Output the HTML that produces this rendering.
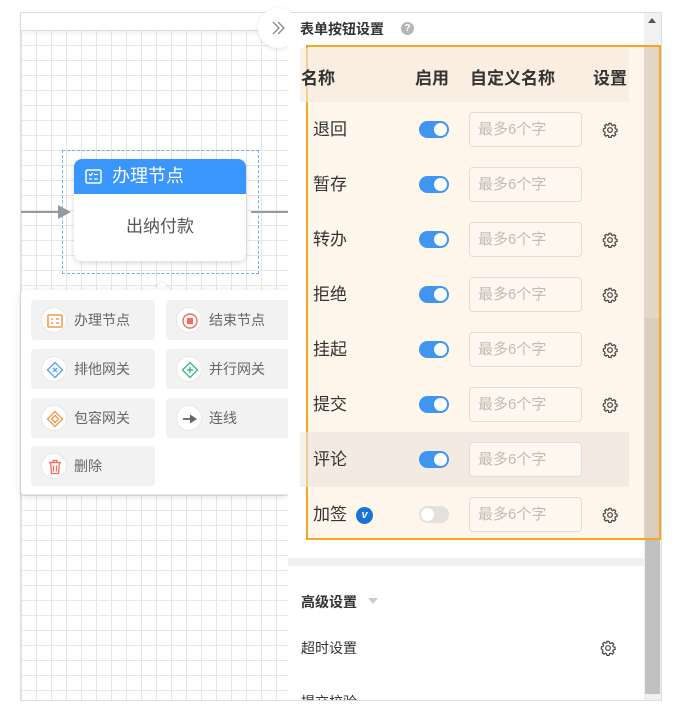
<!DOCTYPE html>
<html><head><meta charset="utf-8"><style>
*{box-sizing:border-box;margin:0;padding:0}
body{width:684px;height:720px;background:#fff;position:relative;overflow:hidden;font-family:"Liberation Sans","Noto Sans CJK SC",sans-serif;color:#333}
.a{position:absolute}
.grid{left:21px;top:30px;width:267px;height:670px;background-color:#fff;background-image:linear-gradient(#e6e6e6 1px,transparent 1px),linear-gradient(90deg,#e6e6e6 1px,transparent 1px);background-size:15px 15px;background-position:0 0}
.item{width:124px;height:40px;background:#f2f2f2;border-radius:4px;font-size:14px;color:#666;line-height:40px;padding-left:43px}
.ic{position:absolute;left:10px;top:7px;width:26px;height:26px;border-radius:50%;background:#fff;border:1px solid #e8e8e8}
.ic svg{position:absolute;left:4px;top:4px}
.row{left:300px;width:329px;height:55px}
.nm{position:absolute;left:13px;top:0;line-height:55px;font-size:17px;color:#333}
.tg{position:absolute;left:119px;top:19px;width:30px;height:17px;border-radius:9px;background:#3f95f0}
.tg::after{content:"";position:absolute;right:2px;top:2px;width:13px;height:13px;border-radius:50%;background:#fff}
.tg.off{background:#e4e1dc}.tg.off::after{left:2px;right:auto}
.in{position:absolute;left:169px;top:10px;width:113px;height:35px;border:1px solid #e6ddd0;border-radius:4px;font-size:15px;color:#c0bbb5;line-height:33px;padding-left:8px;background:#fdf7ef}
.gear{position:absolute;left:302px;top:20px}
</style></head><body>
<div class="a" style="left:20px;top:12px;width:642px;height:689px;border:1px solid #ddd"></div>
<div class="a grid"></div>
<div class="a" style="left:21px;top:13px;width:267px;height:17px;background:#fff;box-shadow:0 3px 6px rgba(0,0,0,.06)"></div>
<div class="a" style="left:21px;top:211px;width:40px;height:2px;background:#999"></div>
<div class="a" style="left:58px;top:205px;width:0;height:0;border-left:13px solid #999;border-top:7px solid transparent;border-bottom:7px solid transparent"></div>
<div class="a" style="left:251px;top:211px;width:37px;height:2px;background:#999"></div>
<div class="a" style="left:62px;top:150px;width:197px;height:124px;border:1px dashed #7aaaf5"></div>
<div class="a" style="left:74px;top:159px;width:172px;height:102px;background:#fff;border-radius:8px;box-shadow:0 2px 6px rgba(0,0,0,.15);overflow:hidden">
 <div style="height:35px;background:#3a96fa;color:#fff;font-size:18px;line-height:35px;padding-left:38px;position:relative">办理节点
 <svg class="a" style="left:11px;top:10px" width="17" height="15" viewBox="0 0 17 15"><rect x="1" y="1" width="15" height="13" rx="1.5" fill="none" stroke="#fff" stroke-width="1.5"/><path d="M4 5l1.5 1.5L8 4M4 10h3M9 5.5h4M9 10h4" stroke="#fff" stroke-width="1.3" fill="none"/></svg></div>
 <div style="text-align:center;font-size:17px;color:#555;line-height:66px">出纳付款</div>
</div>
<div class="a" style="left:156px;top:284px;width:12px;height:12px;background:#fff;transform:rotate(45deg);box-shadow:-1px -1px 2px rgba(0,0,0,.08)"></div>
<div class="a" style="left:21px;top:290px;width:267px;height:204px;background:#fff;box-shadow:0 2px 8px rgba(0,0,0,.15);border-radius:3px"></div>
<div class="a item" style="left:31px;top:300px"><div class="ic"><svg width="18" height="18" viewBox="0 0 18 18"><rect x="2" y="3" width="14" height="12" rx="1" fill="none" stroke="#f49a4e" stroke-width="1.6"/><path d="M5 7h2M5 11h2M10 7h3M10 11h3" stroke="#f49a4e" stroke-width="1.6"/></svg></div>办理节点</div>
<div class="a item" style="left:166px;top:300px"><div class="ic"><svg width="18" height="18" viewBox="0 0 18 18"><circle cx="9" cy="9" r="7" fill="none" stroke="#f46c5a" stroke-width="1.4"/><rect x="6" y="6" width="6" height="6" fill="#f46c5a"/></svg></div>结束节点</div>
<div class="a item" style="left:31px;top:349px"><div class="ic"><svg width="18" height="18" viewBox="0 0 18 18"><path d="M9 1.5L16.5 9 9 16.5 1.5 9z" fill="none" stroke="#5aa4f5" stroke-width="1.4"/><path d="M7 7l4 4M11 7l-4 4" stroke="#5aa4f5" stroke-width="1.4"/></svg></div>排他网关</div>
<div class="a item" style="left:166px;top:349px"><div class="ic"><svg width="18" height="18" viewBox="0 0 18 18"><path d="M9 1.5L16.5 9 9 16.5 1.5 9z" fill="none" stroke="#3dba82" stroke-width="1.4"/><path d="M9 6v6M6 9h6" stroke="#3dba82" stroke-width="1.4"/></svg></div>并行网关</div>
<div class="a item" style="left:31px;top:398px"><div class="ic"><svg width="18" height="18" viewBox="0 0 18 18"><path d="M9 1.5L16.5 9 9 16.5 1.5 9z" fill="none" stroke="#f49a4e" stroke-width="1.4"/><path d="M9 5.5L12.5 9 9 12.5 5.5 9z" fill="none" stroke="#f49a4e" stroke-width="1.4"/></svg></div>包容网关</div>
<div class="a item" style="left:166px;top:398px"><div class="ic"><svg width="18" height="18" viewBox="0 0 18 18"><path d="M2 9h8" stroke="#666" stroke-width="1.8"/><path d="M9 4.5L16 9 9 13.5z" fill="#666"/></svg></div>连线</div>
<div class="a item" style="left:31px;top:446px"><div class="ic"><svg width="18" height="18" viewBox="0 0 18 18"><path d="M3 4.5h12M7 4.5V2.5h4v2M4.5 4.5l1 11h7l1-11M7.5 7.5v6M10.5 7.5v6" stroke="#f46c5a" stroke-width="1.3" fill="none"/></svg></div>删除</div>
<div class="a" style="left:258px;top:8px;width:40px;height:40px;border-radius:50%;background:#fff;box-shadow:0 1px 5px rgba(0,0,0,.12)"><svg class="a" style="left:12px;top:12px" width="16" height="16" viewBox="0 0 16 16"><path d="M3 2l6 6-6 6M8 2l6 6-6 6" stroke="#888" stroke-width="1.3" fill="none"/></svg></div>
<div class="a" style="left:288px;top:13px;width:356px;height:687px;background:#fff"></div>
<div class="a" style="left:300px;top:19px;font-size:14px;font-weight:bold;color:#333">表单按钮设置</div>
<div class="a" style="left:401px;top:22px;width:13px;height:13px;border-radius:50%;background:#b5b5b5;color:#fff;font-size:10px;font-weight:bold;text-align:center;line-height:13px">?</div>
<div class="a" style="left:644px;top:13px;width:17px;height:687px;background:#f1f1f1"></div>
<div class="a" style="left:648px;top:18px;width:0;height:0;border-left:4px solid transparent;border-right:4px solid transparent;border-bottom:5px solid #555"></div>
<div class="a" style="left:645px;top:318px;width:15px;height:376px;background:#c1c1c1"></div>
<div class="a" style="left:306px;top:45px;width:355px;height:495px;background:rgba(253,243,228,.75);border:2px solid #f5a623"></div>
<div class="a" style="left:300px;top:48px;width:329px;height:54px;background:rgba(245,233,218,.6)"></div>
<div class="a" style="left:301px;top:64px;font-size:17px;font-weight:bold;color:#333">名称</div>
<div class="a" style="left:415px;top:64px;font-size:17px;font-weight:bold;color:#333">启用</div>
<div class="a" style="left:470px;top:64px;font-size:17px;font-weight:bold;color:#333">自定义名称</div>
<div class="a" style="left:593px;top:64px;font-size:17px;font-weight:bold;color:#333">设置</div>
<div class="a" style="left:300px;top:432px;width:329px;height:55px;background:rgba(235,228,218,.6)"></div>
<div class="a row" style="top:102px"><div class="nm">退回</div><div class="tg"></div><div class="in">最多6个字</div><svg class="gear" width="16" height="16" viewBox="0 0 24 24"><path d="M10.3 2h3.4l.5 2.6 1.9.8 2.2-1.5 2.4 2.4-1.5 2.2.8 1.9 2.6.5v3.4l-2.6.5-.8 1.9 1.5 2.2-2.4 2.4-2.2-1.5-1.9.8-.5 2.6h-3.4l-.5-2.6-1.9-.8-2.2 1.5-2.4-2.4 1.5-2.2-.8-1.9L2 13.7v-3.4l2.6-.5.8-1.9-1.5-2.2 2.4-2.4 2.2 1.5 1.9-.8z" fill="none" stroke="#444" stroke-width="1.8" stroke-linejoin="round"/><circle cx="12" cy="12" r="3.5" fill="none" stroke="#444" stroke-width="1.8"/></svg></div>
<div class="a row" style="top:157px"><div class="nm">暂存</div><div class="tg"></div><div class="in">最多6个字</div></div>
<div class="a row" style="top:212px"><div class="nm">转办</div><div class="tg"></div><div class="in">最多6个字</div><svg class="gear" width="16" height="16" viewBox="0 0 24 24"><path d="M10.3 2h3.4l.5 2.6 1.9.8 2.2-1.5 2.4 2.4-1.5 2.2.8 1.9 2.6.5v3.4l-2.6.5-.8 1.9 1.5 2.2-2.4 2.4-2.2-1.5-1.9.8-.5 2.6h-3.4l-.5-2.6-1.9-.8-2.2 1.5-2.4-2.4 1.5-2.2-.8-1.9L2 13.7v-3.4l2.6-.5.8-1.9-1.5-2.2 2.4-2.4 2.2 1.5 1.9-.8z" fill="none" stroke="#444" stroke-width="1.8" stroke-linejoin="round"/><circle cx="12" cy="12" r="3.5" fill="none" stroke="#444" stroke-width="1.8"/></svg></div>
<div class="a row" style="top:267px"><div class="nm">拒绝</div><div class="tg"></div><div class="in">最多6个字</div><svg class="gear" width="16" height="16" viewBox="0 0 24 24"><path d="M10.3 2h3.4l.5 2.6 1.9.8 2.2-1.5 2.4 2.4-1.5 2.2.8 1.9 2.6.5v3.4l-2.6.5-.8 1.9 1.5 2.2-2.4 2.4-2.2-1.5-1.9.8-.5 2.6h-3.4l-.5-2.6-1.9-.8-2.2 1.5-2.4-2.4 1.5-2.2-.8-1.9L2 13.7v-3.4l2.6-.5.8-1.9-1.5-2.2 2.4-2.4 2.2 1.5 1.9-.8z" fill="none" stroke="#444" stroke-width="1.8" stroke-linejoin="round"/><circle cx="12" cy="12" r="3.5" fill="none" stroke="#444" stroke-width="1.8"/></svg></div>
<div class="a row" style="top:322px"><div class="nm">挂起</div><div class="tg"></div><div class="in">最多6个字</div><svg class="gear" width="16" height="16" viewBox="0 0 24 24"><path d="M10.3 2h3.4l.5 2.6 1.9.8 2.2-1.5 2.4 2.4-1.5 2.2.8 1.9 2.6.5v3.4l-2.6.5-.8 1.9 1.5 2.2-2.4 2.4-2.2-1.5-1.9.8-.5 2.6h-3.4l-.5-2.6-1.9-.8-2.2 1.5-2.4-2.4 1.5-2.2-.8-1.9L2 13.7v-3.4l2.6-.5.8-1.9-1.5-2.2 2.4-2.4 2.2 1.5 1.9-.8z" fill="none" stroke="#444" stroke-width="1.8" stroke-linejoin="round"/><circle cx="12" cy="12" r="3.5" fill="none" stroke="#444" stroke-width="1.8"/></svg></div>
<div class="a row" style="top:377px"><div class="nm">提交</div><div class="tg"></div><div class="in">最多6个字</div><svg class="gear" width="16" height="16" viewBox="0 0 24 24"><path d="M10.3 2h3.4l.5 2.6 1.9.8 2.2-1.5 2.4 2.4-1.5 2.2.8 1.9 2.6.5v3.4l-2.6.5-.8 1.9 1.5 2.2-2.4 2.4-2.2-1.5-1.9.8-.5 2.6h-3.4l-.5-2.6-1.9-.8-2.2 1.5-2.4-2.4 1.5-2.2-.8-1.9L2 13.7v-3.4l2.6-.5.8-1.9-1.5-2.2 2.4-2.4 2.2 1.5 1.9-.8z" fill="none" stroke="#444" stroke-width="1.8" stroke-linejoin="round"/><circle cx="12" cy="12" r="3.5" fill="none" stroke="#444" stroke-width="1.8"/></svg></div>
<div class="a row" style="top:432px"><div class="nm">评论</div><div class="tg"></div><div class="in">最多6个字</div></div>
<div class="a row" style="top:487px"><div class="nm">加签</div><div class="a" style="left:56px;top:20px;width:17px;height:17px;border-radius:50%;background:#1a73d9;color:#fff;font-size:11px;font-weight:bold;font-style:italic;text-align:center;line-height:17px">v</div><div class="tg off"></div><div class="in">最多6个字</div><svg class="gear" width="16" height="16" viewBox="0 0 24 24"><path d="M10.3 2h3.4l.5 2.6 1.9.8 2.2-1.5 2.4 2.4-1.5 2.2.8 1.9 2.6.5v3.4l-2.6.5-.8 1.9 1.5 2.2-2.4 2.4-2.2-1.5-1.9.8-.5 2.6h-3.4l-.5-2.6-1.9-.8-2.2 1.5-2.4-2.4 1.5-2.2-.8-1.9L2 13.7v-3.4l2.6-.5.8-1.9-1.5-2.2 2.4-2.4 2.2 1.5 1.9-.8z" fill="none" stroke="#444" stroke-width="1.8" stroke-linejoin="round"/><circle cx="12" cy="12" r="3.5" fill="none" stroke="#444" stroke-width="1.8"/></svg></div>
<div class="a" style="left:644px;top:47px;width:15px;height:491px;background:rgba(160,140,115,.28)"></div>
<div class="a" style="left:288px;top:558px;width:356px;height:8px;background:#f0f0f0"></div>
<div class="a" style="left:301px;top:592px;font-size:14px;font-weight:bold;color:#333">高级设置</div>
<div class="a" style="left:368px;top:598px;width:0;height:0;border-left:5px solid transparent;border-right:5px solid transparent;border-top:6px solid #ccc"></div>
<div class="a" style="left:301px;top:638px;font-size:14px;color:#333">超时设置</div>
<svg class="a" style="left:600px;top:640px" width="16" height="16" viewBox="0 0 24 24"><path d="M10.3 2h3.4l.5 2.6 1.9.8 2.2-1.5 2.4 2.4-1.5 2.2.8 1.9 2.6.5v3.4l-2.6.5-.8 1.9 1.5 2.2-2.4 2.4-2.2-1.5-1.9.8-.5 2.6h-3.4l-.5-2.6-1.9-.8-2.2 1.5-2.4-2.4 1.5-2.2-.8-1.9L2 13.7v-3.4l2.6-.5.8-1.9-1.5-2.2 2.4-2.4 2.2 1.5 1.9-.8z" fill="none" stroke="#444" stroke-width="1.8" stroke-linejoin="round"/><circle cx="12" cy="12" r="3.5" fill="none" stroke="#444" stroke-width="1.8"/></svg>
<div class="a" style="left:288px;top:690px;width:356px;height:10px;overflow:hidden"><div style="position:absolute;left:13px;top:2px;font-size:14px;color:#333">提交校验</div></div>
<div class="a" style="left:0;top:701px;width:684px;height:19px;background:#fff"></div>
<div class="a" style="left:20px;top:700px;width:642px;height:1px;background:#ddd"></div>
</body></html>
